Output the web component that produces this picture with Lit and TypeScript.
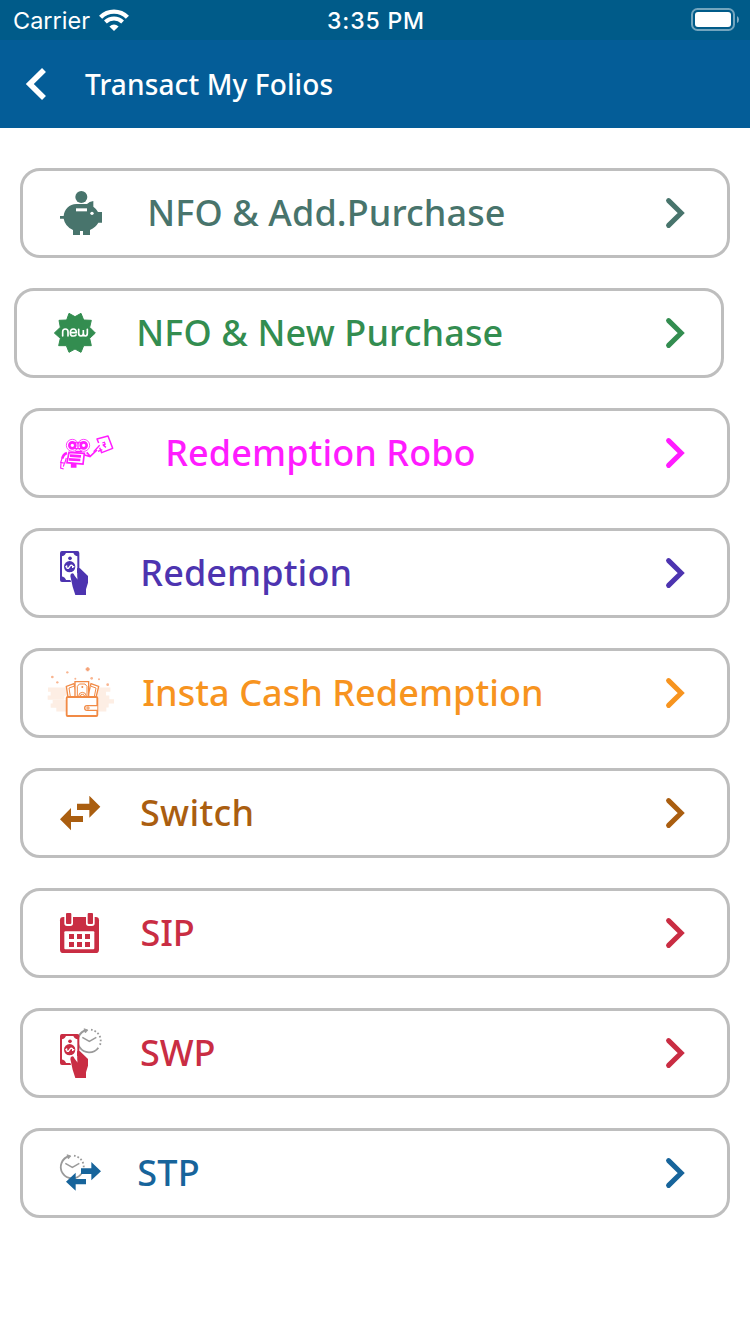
import { LitElement, html, svg, css } from "lit";
import type { SVGTemplateResult } from "lit";
import { customElement, property } from "lit/decorators.js";
import { styleMap } from "lit/directives/style-map.js";

/* Icons are drawn on a 270x198 grid and shown at a third of that size. */
const note = (c: string, dy: number) => svg`
  <g transform="translate(30 ${dy})">
    <rect x="33" y="36" width="52" height="87" rx="3" fill="#fff" stroke=${c} stroke-width="6"/>
    <path fill=${c} d="M33 35h16q-2 12-16 14zM85 35h-16q2 12 16 14zM33 123h16q-2-12-16-14z"/>
    <circle cx="60" cy="55" r="5.5" fill=${c}/>
    <circle cx="59" cy="80" r="17" fill=${c}/>
    <path d="M50 76q-1 11 5 9l7-9q7-2 6 8M46 80h4M67 80h6" fill="none" stroke="#fff" stroke-width="4"/>
    <path fill="#fff" d="M57 108q0-12 9-12q6 0 10 7l6 8V128H64z"/>
    <path fill=${c} d="M61 108q0-8 6-8q4 0 7 7l9 12V84l7 1 24 23v20l-6 20v17H76l-8-25z"/>
    <path fill=${c} d="M81 85h8v14h-8z"/>
  </g>`;

const clock = (x: number, y: number) => svg`
  <g transform="translate(${x} ${y})" fill="none" stroke="#9a9a9a" stroke-width="5.5">
    <path d="M-8 -33A34 34 0 1 0 27 20"/>
    <path d="M5 -34A34 34 0 0 1 30 16" stroke-dasharray="5 6"/>
    <path d="M-21 -11L0 1L21 -11" stroke-width="4.5"/>
    <path d="M-16 -37l12 4-8 9z" fill="#9a9a9a" stroke-width="2"/>
  </g>`;

const icons: Record<string, (c: string) => SVGTemplateResult> = {
  piggy: (c) => svg`
    <circle cx="124" cy="51" r="18" fill=${c}/>
    <path fill=${c} d="M60 108h11C73 87 88 72 109 72h32q7-8 19-9v17q9 6 14 16h12v32h-11q-7 13-25 22v15h-21v-12h-9v12H99v-15q-24-11-28-34H60z"/>
    <path fill="#fff" d="M108 85h33v9h-33z"/><circle cx="156" cy="100" r="5" fill="#fff"/>`,
  badge: (c) => svg`
    <path fill=${c} stroke=${c} stroke-width="3" stroke-linejoin="round" d="M105 50L87 40L80 60L57 61L61 82L43 99L61 115L56 137L79 137L87 157L105 147L123 157L131 137L154 137L149 115L166 99L149 82L154 61L131 60L123 40Z"/>
    <path d="M68 108V95q0-8 8-8t8 8v13M92 98h17q0-11-9-11t-9 11 9 10q6 0 8-3M116 88v12q0 8 7 8t7-8V90v10q0 8 6 8t6-8V88" fill="none" stroke="#fff" stroke-width="5" stroke-linecap="round"/>`,
  robot: (c) => svg`
    <g transform="translate(30 15)" fill="none" stroke=${c}>
      <g stroke-width="2.5">
        <circle cx="67" cy="61" r="18"/><circle cx="101" cy="61" r="18"/>
      </g>
      <g stroke-width="8"><circle cx="67" cy="61" r="9"/><circle cx="101" cy="61" r="9"/></g>
      <path d="M74 51q10 6 20 0M75 71h19M76 79h20" stroke-width="4"/>
      <path d="M57 82L103 85L99 117L51 113Z" stroke-width="5"/>
      <path d="M60 92l33 2M57 103l34 2" stroke-width="8"/>
      <path d="M65 116v10h12v-9z" stroke-width="5" fill=${c}/>
      <path d="M51 84q-12 4-14 17" stroke-width="8"/>
      <path d="M37 98l-5 14 12 3 5-16M33 113l-1 16 9 3M43 115l-3 10" stroke-width="3.5"/>
      <path d="M104 90l16 5 21-20M110 82l10 11" stroke-width="5"/>
      <path d="M146 54l-5-12 33-9 14 37-33 13-6-15" stroke-width="4.5" stroke-linejoin="round"/>
      <path d="M131 80l18-19M144 79l13-5" stroke-width="4"/>
      <path d="M157 54l8-3M158 60l9-2M163 52q5 6-2 10l7 5" stroke-width="4"/>
    </g>`,
  note: (c) => note(c, 0),
  wallet: () => svg`
    <g stroke="#fdeee4" stroke-width="12.5">
      <path d="M24 89h70M32 101h60M23 113h50M38 126h50M32 137h50M49 148h40M160 89h51M160 101h38M170 113h38M170 124h52M170 136h36M170 148h29"/>
    </g>
    <g fill="#fff" stroke="#f18a45" stroke-width="4">
      <path d="M84 112L79 79l23-8 10 40M168 112l8-33-23-8-10 40"/>
      <path d="M91 110L87 84l17-6M163 110l5-26-17-6" stroke-width="3"/>
      <path d="M105 113V65h41v48z"/>
      <path d="M112 110V79l6-7h17l6 7v31" fill="none" stroke-width="3"/>
      <path d="M116 109q0-12 11-12t12 12M121 109q0-6 6-6t7 6" fill="none" stroke-width="3"/>
      <rect x="80" y="111" width="92" height="57" rx="3" stroke-width="5.5"/>
      <path d="M172 137h-31q-7 0-7 7t7 7h31" stroke-width="4"/>
      <circle cx="144" cy="144" r="3.5" stroke-width="3"/>
    </g>
    <circle cx="127" cy="81" r="3" fill="#f18a45"/>
    <path d="M143 22v12M137 28h12" stroke="#f5a277" stroke-width="6"/>
    <g fill="#f9b48f"><circle cx="37" cy="51" r="4"/><circle cx="82" cy="37" r="3.5"/><circle cx="52" cy="67" r="3.5"/><circle cx="155" cy="55" r="4"/><circle cx="177" cy="58" r="3"/><circle cx="203" cy="74" r="4"/><circle cx="106" cy="56" r="3"/></g>`,
  swap: (c) => svg`
    <path transform="translate(30 0)" fill=${c} d="M81 71h37V47l33 33-33 33V90H81zM99 108H63V84l-33 34 33 33v-25h36z"/>`,
  calendar: (c) => svg`
    <g transform="translate(30 0)">
      <rect x="30" y="51" width="117" height="108" rx="10" fill=${c}/>
      <path d="M43 46h26v24q0 8-8 8H51q-8 0-8-8zM108 46h26v24q0 8-8 8h-10q-8 0-8-8z" fill="#fff"/>
      <rect x="48" y="39" width="16" height="33" rx="3" fill=${c}/><rect x="113" y="39" width="16" height="33" rx="3" fill=${c}/>
      <rect x="43" y="94" width="90" height="54" rx="3" fill="#fff"/>
      <path fill=${c} d="M57 102h15v15H57zM81 102h15v15H81zM105 102h15v15h-15zM57 126h15v15H57zM81 126h15v15H81zM105 126h15v15h-15z"/>
    </g>`,
  noteClock: (c) => svg`${clock(148, 63)}${note(c, 9)}`,
  swapClock: (c) => svg`${clock(97, 81)}
    <path transform="translate(30 0)" fill=${c} d="M93 85h31V66l29 28-29 27v-19H93zM108 117H77V98l-29 27 29 27v-19h31z"/>`,
};

interface Item {
  label: string; icon: string; color: string;
  start: number; spacing: number; shifted?: boolean;
}

const items: Item[] = [
  { label: "NFO & Add.Purchase", icon: "piggy", color: "#48746c", start: 17.3, spacing: 0.1 },
  { label: "NFO & New Purchase", icon: "badge", color: "#338d50", start: 6.3, spacing: 0.13, shifted: true },
  { label: "Redemption Robo", icon: "robot", color: "#ff1cff", start: 35.3, spacing: 0.07 },
  { label: "Redemption", icon: "note", color: "#4d34b0", start: 10.3, spacing: 0.1 },
  { label: "Insta Cash Redemption", icon: "wallet", color: "#f7941f", start: 12.3, spacing: 0.05 },
  { label: "Switch", icon: "swap", color: "#aa5e10", start: 10, spacing: 0.3 },
  { label: "SIP", icon: "calendar", color: "#c92d43", start: 10.6, spacing: -0.2 },
  { label: "SWP", icon: "noteClock", color: "#c92d43", start: 10, spacing: -0.1 },
  { label: "STP", icon: "swapClock", color: "#17649b", start: 7.3, spacing: 0.2 },
];

@customElement("folio-action")
class FolioAction extends LitElement {
  @property({ attribute: false }) item!: Item;

  static styles = css`
    :host { display: block; }
    .row {
      display: flex; align-items: center; box-sizing: border-box;
      width: 710px; height: 90px; padding: 0 41px 0 17px;
      border: 3px solid #bebebe; border-radius: 20px; background: #fff;
    }
    .shifted { margin-left: -6px; padding: 0 35px 0 23px; }
    .icon { width: 90px; height: 66px; flex: none; }
    .label { flex: 1; font-size: 36px; font-weight: 500; line-height: 50px; white-space: nowrap; }
    .chevron { width: 22px; height: 34px; flex: none; }
  `;

  render() {
    const { label, icon, color, start, spacing, shifted } = this.item;
    return html`<div class="row ${shifted ? "shifted" : ""}">
      <svg class="icon" viewBox="0 0 270 198">${icons[icon](color)}</svg>
      <span class="label" style=${styleMap({ color, paddingLeft: `${start}px`, letterSpacing: `${spacing}px` })}>${label}</span>
      <svg class="chevron" viewBox="0 0 22 34"><path d="M4.6 4.6L17.2 17L4.6 29.4" fill="none" stroke=${color} stroke-width="5" stroke-linecap="round"/></svg>
    </div>`;
  }
}

@customElement("app-root")
class AppRoot extends LitElement {
  static styles = css`
    :host { display: block; height: 1334px; overflow: hidden; background: #fff; font-family: "Noto Sans", sans-serif; }
    .status {
      display: grid; grid-template-columns: 1fr auto 1fr; align-items: center;
      box-sizing: border-box; height: 40px; padding: 0 11px 0 13px;
      background: #005b89; color: #fff; font-family: Inter, sans-serif; line-height: 38px;
    }
    .carrier { display: flex; align-items: center; gap: 9px; font-size: 23.5px; }
    .name { padding-top: 2px; }
    .time { padding-top: 2px; font-weight: 500; font-size: 23px; letter-spacing: 0.85px; }
    .wifi { width: 30px; height: 22px; }
    .battery { width: 48px; height: 24px; justify-self: end; }
    .nav { display: flex; align-items: center; height: 88px; padding-left: 24px; background: #045d98; color: #fff; }
    .back { width: 24px; height: 34px; }
    .title { margin-left: 37px; font-size: 28px; font-weight: 500; line-height: 40px; letter-spacing: 0.12px; }
    .list { display: flex; flex-direction: column; gap: 30px; padding: 40px 20px; }
  `;

  render() {
    return html`
      <header>
        <div class="status">
          <div class="carrier"><span class="name">Carrier</span>
            <svg class="wifi" viewBox="0 0 30 22" fill="none" stroke="#fff">
              <path d="M1.6 8.2A19 19 0 0 1 28.4 8.2" stroke-width="4.4"/>
              <path d="M6.4 13A12.5 12.5 0 0 1 23.6 13" stroke-width="4"/>
              <path d="M15 22L10.4 17.4Q15 13.6 19.6 17.4Z" fill="#fff" stroke="none"/>
            </svg>
          </div>
          <span class="time">3:35 PM</span>
          <svg class="battery" viewBox="0 0 48 24">
            <rect x="1" y="1" width="42" height="21" rx="5.5" fill="none" stroke="#fff" stroke-opacity=".45" stroke-width="2"/>
            <rect x="4" y="4" width="36" height="15" rx="3" fill="#fff"/>
            <path d="M46 8q2 1 2 3.5T46 15z" fill="#fff" fill-opacity=".5"/>
          </svg>
        </div>
        <div class="nav">
          <svg class="back" viewBox="0 0 24 34"><path d="M20 3L5.8 17L20 31" fill="none" stroke="#fff" stroke-width="5.6"/></svg>
          <span class="title">Transact My Folios</span>
        </div>
      </header>
      <main class="list">${items.map((item) => html`<folio-action .item=${item}></folio-action>`)}</main>
    `;
  }
}
